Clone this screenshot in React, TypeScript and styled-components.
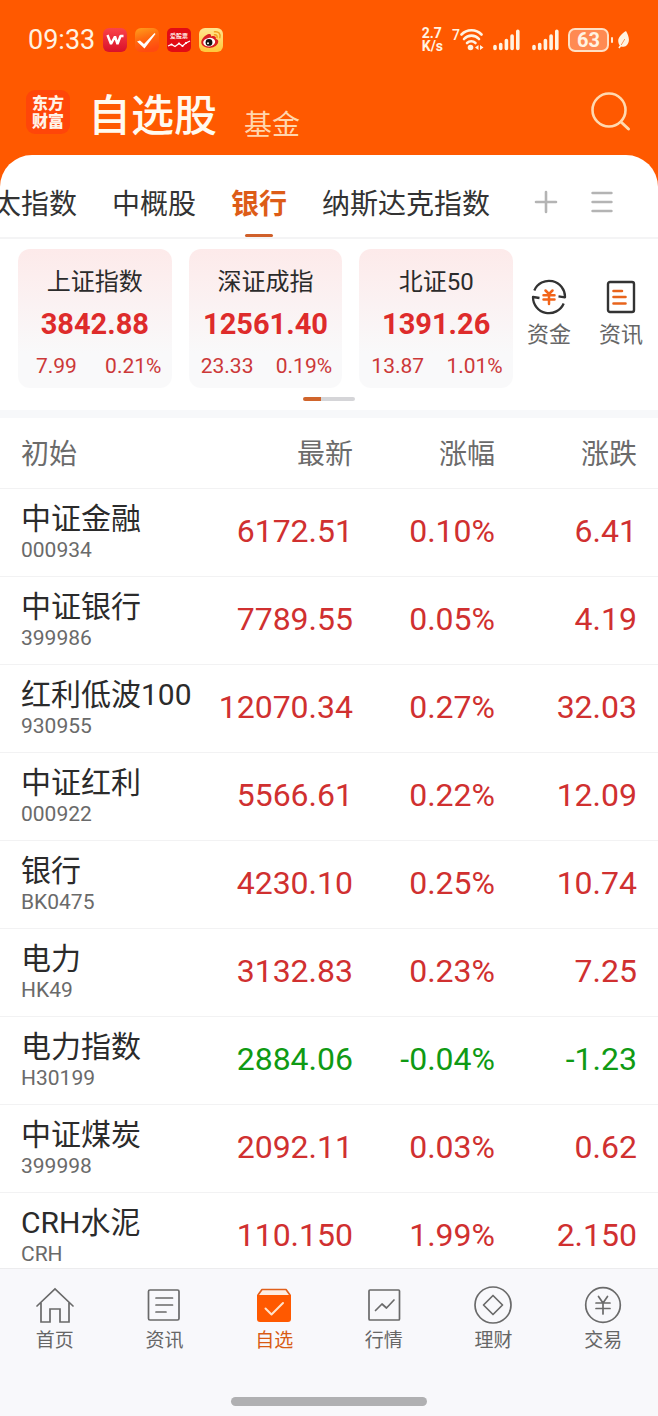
import React from 'react';
import styled, { createGlobalStyle } from 'styled-components';

const GlobalStyle = createGlobalStyle`
  * { box-sizing: border-box; }
  body {
    margin: 0;
    background: #ff5900;
    font-family: Roboto, "Noto Sans CJK SC", sans-serif;
    color: #2b2b2b;
  }
  button {
    border: 0;
    padding: 0;
    background: none;
    font: inherit;
    color: inherit;
    cursor: pointer;
  }
  a { color: inherit; text-decoration: none; }
  svg { display: block; flex: none; }
`;

const Screen = styled.div`
  display: flex;
  flex-direction: column;
  height: 100vh;
  overflow: hidden;
`;

/* ---------- status bar ---------- */

const StatusBar = styled.div`
  display: flex;
  align-items: center;
  justify-content: space-between;
  height: 80px;
  padding: 0 28px;
  color: #fff3e2;
`;

const StatusGroup = styled.div<{ $gap: number }>`
  display: flex;
  align-items: center;
  gap: ${(p) => p.$gap}px;
`;

const Clock = styled.span`
  font-size: 27px;
  line-height: 32px;
`;

const NetSpeed = styled.span`
  display: flex;
  flex-direction: column;
  font-size: 14px;
  line-height: 13px;
  font-weight: 700;
`;

const WifiBox = styled.span`
  display: flex;
  align-items: flex-start;
  font-size: 14px;
  line-height: 13px;
  font-weight: 500;
`;

const Battery = styled.span`
  display: flex;
  align-items: center;
  gap: 2px;
  &::after {
    content: '';
    width: 2px;
    height: 6px;
    border-radius: 1px;
    background: #ffe9d2;
  }
`;

const BatteryLevel = styled.span`
  width: 41px;
  height: 24px;
  border: 2px solid #ffe0c4;
  border-radius: 7px;
  background: #ff8a52;
  font-size: 20px;
  line-height: 20px;
  font-weight: 700;
  text-align: center;
`;

/* ---------- header ---------- */

const Header = styled.header`
  display: flex;
  align-items: center;
  height: 75px;
  padding: 0 26px 11px;
`;

const Logo = styled.span`
  display: flex;
  flex-direction: column;
  align-items: center;
  justify-content: center;
  width: 44px;
  height: 44px;
  padding-top: 1px;
  border-radius: 9px;
  background: #ff4609;
  color: #fff3e8;
  font-size: 16px;
  line-height: 18px;
  font-weight: 900;
`;

const Title = styled.h1`
  margin: 8px 0 0 18px;
  color: #fffaf0;
  font-size: 43px;
  line-height: 48px;
  font-weight: 500;
`;

const SubTitle = styled.button`
  && {
    margin: 28px auto 0 27px;
    color: #ffd6ae;
    font-size: 28px;
    line-height: 32px;
  }
`;

/* ---------- panel with tabs ---------- */

const Panel = styled.main`
  display: flex;
  flex-direction: column;
  flex: 1;
  min-height: 0;
  border-radius: 32px 32px 0 0;
  background: #fff;
  overflow: hidden;
`;

const TabBar = styled.div`
  display: flex;
  flex: none;
  height: 84px;
  border-bottom: 2px solid #f4f4f5;
`;

const Tabs = styled.nav`
  display: flex;
  justify-content: flex-end;
  gap: 35px;
  flex: 1;
  min-width: 0;
  overflow: hidden;
`;

const Tab = styled.button<{ $active?: boolean }>`
  && {
    display: flex;
    flex-direction: column;
    align-items: center;
    justify-content: space-between;
    flex: none;
    padding-top: 32px;
    white-space: nowrap;
    font-size: 28px;
    line-height: 36px;
    color: ${(p) => (p.$active ? '#dd5c17' : '#333')};
    font-weight: ${(p) => (p.$active ? 700 : 400)};
  }
  &::after {
    content: '';
    width: 28px;
    height: 3px;
    border-radius: 2px;
    background: ${(p) => (p.$active ? '#d0602a' : 'transparent')};
  }
`;

const TabTools = styled.div`
  display: flex;
  align-items: center;
  gap: 32px;
  padding: 12px 44px 0;
`;

/* ---------- indices ---------- */

const Indices = styled.section`
  display: flex;
  flex: none;
  padding: 10px 1px 0 18px;
`;

const Cards = styled.div`
  display: grid;
  grid-template-columns: repeat(3, 1fr);
  gap: 17px;
  flex: 1;
`;

const Card = styled.article`
  display: flex;
  flex-direction: column;
  align-items: center;
  height: 139px;
  padding-top: 17px;
  border-radius: 12px;
  background: linear-gradient(#fdeaea, #f9f9fa 75%);
`;

const CardName = styled.span`
  font-size: 24px;
  line-height: 32px;
`;

const CardValue = styled.strong`
  margin-top: 8px;
  font-size: 29px;
  line-height: 36px;
  color: #de2b2b;
`;

const CardChange = styled.div`
  display: grid;
  grid-template-columns: 1fr 1fr;
  align-self: stretch;
  margin-top: 10px;
  font-size: 21px;
  line-height: 28px;
  color: #cc3838;
  text-align: center;
`;

const Quick = styled.button`
  && {
    display: flex;
    flex-direction: column;
    align-items: center;
    gap: 4px;
    width: 72px;
    padding-top: 30px;
    color: #666;
    font-size: 22px;
    line-height: 32px;
  }
`;

const Pager = styled.div`
  flex: none;
  align-self: center;
  width: 52px;
  height: 4px;
  margin: 9px 0;
  border-radius: 2px;
  background: linear-gradient(to right, #d0652c 34%, #d5d5d8 34%);
`;

const Band = styled.div`
  flex: none;
  height: 8px;
  background: #f7f8fa;
`;

/* ---------- quotes ---------- */

const List = styled.div`
  flex: 1;
  min-height: 0;
  overflow-y: auto;
  scrollbar-width: none;
`;

const Table = styled.table`
  width: 100%;
  table-layout: fixed;
  border-collapse: separate;
  border-spacing: 0;
`;

const Head = styled.th<{ $width?: number }>`
  width: ${(p) => (p.$width ? `${p.$width}px` : 'auto')};
  height: 71px;
  padding: 4px 0 0;
  border-bottom: 1px solid #f2f2f3;
  color: #6b6b6b;
  font-size: 28px;
  line-height: 36px;
  font-weight: 400;
  text-align: right;
  &:first-child { padding-left: 21px; text-align: left; }
  &:last-child { padding-right: 21px; }
`;

const NameCell = styled.th`
  height: 88px;
  padding: 0 0 2px 21px;
  border-bottom: 1px solid #f2f2f3;
  text-align: left;
  font-weight: 400;
  white-space: nowrap;
`;

const Name = styled.div`
  font-size: 30px;
  line-height: 36px;
`;

const Code = styled.div`
  color: #6a6a6a;
  font-size: 21px;
  line-height: 26px;
`;

const NumCell = styled.td<{ $down?: boolean }>`
  padding: 0 0 3px;
  border-bottom: 1px solid #f2f2f3;
  text-align: right;
  white-space: nowrap;
  font-size: 32px;
  line-height: 40px;
  color: ${(p) => (p.$down ? '#0f9a14' : '#d03030')};
  &:last-child { padding-right: 21px; }
`;

/* ---------- bottom bar ---------- */

const Bottom = styled.footer`
  flex: none;
  height: 148px;
  border-top: 1px solid #ececee;
  background: #f8f8fb;
`;

const BottomNav = styled.nav`
  display: grid;
  grid-template-columns: repeat(6, 1fr);
  height: 128px;
`;

const NavLink = styled.a<{ $active?: boolean }>`
  display: flex;
  flex-direction: column;
  align-items: center;
  gap: 2px;
  padding-top: 16px;
  font-size: 19px;
  line-height: 28px;
  color: ${(p) => (p.$active ? '#d85c14' : '#666')};
`;

const HomeBar = styled.div`
  width: 196px;
  height: 9px;
  margin: 0 auto;
  border-radius: 5px;
  background: #b0b0b2;
`;

/* ---------- drawings ---------- */

const AppW = () => (
  <svg width="24" height="24" viewBox="0 0 24 24" aria-hidden="true">
    <defs>
      <linearGradient id="wbg" x1="0" y1="0" x2="0" y2="1">
        <stop offset="0" stopColor="#fb4348" />
        <stop offset="1" stopColor="#d8102a" />
      </linearGradient>
    </defs>
    <rect width="24" height="24" rx="6" fill="url(#wbg)" />
    <path d="M4.500 7L8 16L12 8.500L14.500 16L17.500 8H20.500" fill="none" stroke="#fff" strokeWidth="2.400" strokeLinejoin="bevel" />
  </svg>
);

const AppCheck = () => (
  <svg width="24" height="24" viewBox="0 0 24 24" aria-hidden="true">
    <defs>
      <linearGradient id="cbg" x1="0" y1="0" x2="0.3" y2="1">
        <stop offset="0" stopColor="#ffa01c" />
        <stop offset="0.5" stopColor="#ff6a10" />
        <stop offset="1" stopColor="#ff4b10" />
      </linearGradient>
    </defs>
    <rect width="24" height="24" rx="6" fill="url(#cbg)" />
    <path d="M2 13.500L5 12.500L9 16L19.500 5L20.500 6L9.500 20.500Z" fill="#fff" />
  </svg>
);

const AppStock = () => (
  <svg width="24" height="24" viewBox="0 0 24 24" aria-hidden="true">
    <rect width="24" height="24" rx="5" fill="#e20c14" />
    <text x="12" y="10" textAnchor="middle" fontSize="6" fontWeight="700" fill="#ffe9e4">爱股票</text>
    <path d="M1 18L4.500 16.500L8 18.500L12 15.500L15.500 18L19 15L23 13" fill="none" stroke="#fff" strokeWidth="1.300" />
    <circle cx="4.500" cy="16.500" r="1.100" fill="#fff" />
    <circle cx="12" cy="15.500" r="1.100" fill="#fff" />
    <circle cx="15.500" cy="18" r="1.100" fill="#fff" />
    <circle cx="19" cy="15" r="1.100" fill="#fff" />
  </svg>
);

const AppWeibo = () => (
  <svg width="24" height="24" viewBox="0 0 24 24" aria-hidden="true">
    <defs>
      <linearGradient id="bbg" x1="0" y1="0" x2="0" y2="1">
        <stop offset="0" stopColor="#ffe68f" />
        <stop offset="1" stopColor="#ffc73a" />
      </linearGradient>
    </defs>
    <rect width="24" height="24" rx="6" fill="url(#bbg)" />
    <path d="M10 6C11.500 5.500 12.500 6.800 12 8.500C15 7.500 17.500 8.300 16.800 10.800C19 11.500 19.800 13 19 15C17.500 18.500 13 20.300 9 19.800C5 19.300 2 17 2.300 13.800C2.700 10.500 7 6.500 10 6Z" fill="#d81e22" />
    <ellipse cx="10.200" cy="14.200" rx="6" ry="4.300" transform="rotate(-8 10.200 14.200)" fill="#fff" />
    <circle cx="10" cy="14.400" r="3.400" fill="#111" />
    <circle cx="9" cy="15.200" r="1" fill="#fff" />
    <path d="M15.500 3.800C19.500 3 22 6 20.800 9.700M15.500 6.800C17.500 6.500 18.500 7.800 18 9.500" fill="none" stroke="#f3a021" strokeWidth="1.500" strokeLinecap="round" />
  </svg>
);

const Wifi = () => (
  <svg width="24" height="22" viewBox="0 0 24 22" aria-hidden="true">
    <g fill="none" stroke="#fff3e2" strokeWidth="2.600" strokeLinecap="round">
      <path d="M1.500 5.500A14 14 0 0 1 21.500 5.500" />
      <path d="M4 10A10 10 0 0 1 19 10" />
      <path d="M7 14A6.500 6.500 0 0 1 15.500 14" />
    </g>
    <circle cx="10.500" cy="18.500" r="2.800" fill="#fff3e2" />
    <path d="M18.500 16V21L15 18.500ZM20 16V21L23.500 18.500Z" fill="#fff3e2" />
  </svg>
);

const Signal = () => (
  <svg width="27" height="22" viewBox="0 0 27 22" aria-hidden="true">
    <g stroke="#fff3e2" strokeWidth="3.600" strokeLinecap="round">
      <path d="M2 17.500V19.500M7.700 15.500V19.500M13.400 11.500V19.500M19.100 7V19.500M24.800 2.200V19.500" />
    </g>
  </svg>
);

const Leaf = () => (
  <svg width="13" height="18" viewBox="0 0 13 18" aria-hidden="true">
    <path d="M9 0C12 5 13.500 11 9.500 14.500C7.500 16.200 5 16 4 15.500L2.500 17.500L1.300 16.500L2.800 14.500C-1 9 2.500 4 9 0Z" fill="#fff3e2" />
    <path d="M7.800 8L4.200 14" stroke="#ff6a1c" strokeWidth="0.700" />
  </svg>
);

const SearchIcon = () => (
  <svg width="42" height="42" viewBox="0 0 42 42" fill="none" stroke="#ffd9b0" aria-hidden="true">
    <circle cx="19" cy="19" r="16.500" strokeWidth="2.600" />
    <path d="M31 31L38.500 38" strokeWidth="3" strokeLinecap="round" />
  </svg>
);

const PlusIcon = () => (
  <svg width="24" height="24" viewBox="0 0 24 24" stroke="#b4b4b4" strokeWidth="2.600" strokeLinecap="round" aria-hidden="true">
    <path d="M2 12H22M12 2V22" />
  </svg>
);

const MenuIcon = () => (
  <svg width="24" height="24" viewBox="0 0 24 24" stroke="#b4b4b4" strokeWidth="2.400" strokeLinecap="round" aria-hidden="true">
    <path d="M2.500 3H21.500M2.500 12H21.500M2.500 21H21.500" />
  </svg>
);

const FundIcon = () => (
  <svg width="36" height="36" viewBox="0 0 36 36" fill="none" aria-hidden="true">
    <g stroke="#333" strokeWidth="2.300" strokeLinejoin="round">
      <path d="M3.300 11.500A16 16 0 0 1 34 18.300L27.500 17.300" />
      <path d="M32.700 24.500A16 16 0 0 1 2 18L8.500 19" />
    </g>
    <path d="M14.500 11.500L18 15L21.500 11.500M12.500 16.200H23.500M12.500 20.500H23.500M18 16V25" stroke="#f26419" strokeWidth="2.500" strokeLinecap="round" />
  </svg>
);

const NewsIcon = () => (
  <svg width="36" height="36" viewBox="0 0 36 36" fill="none" aria-hidden="true">
    <rect x="5" y="3" width="26" height="30" rx="2" stroke="#333" strokeWidth="2.400" />
    <path d="M10.500 12H19M10.500 18H22.500M10.500 24.500H22.500" stroke="#e8641c" strokeWidth="2.600" strokeLinecap="round" />
  </svg>
);

const NavIcon = ({ children }: { children: React.ReactNode }) => (
  <svg width="40" height="40" viewBox="0 0 40 40" fill="none" stroke="#6a6a6a" strokeWidth="1.700" strokeLinejoin="round" strokeLinecap="round" aria-hidden="true">
    {children}
  </svg>
);

const navItems = [
  {
    label: '首页',
    icon: <path d="M2 21L20 4L38 21M6 18V37H15V24H25V37H34V18" strokeLinejoin="miter" />,
  },
  {
    label: '资讯',
    icon: (
      <>
        <rect x="4.500" y="5" width="30.500" height="30" rx="1.500" />
        <path d="M12 13H28.500M12 20H28.500M12 27H22" />
      </>
    ),
  },
  {
    label: '自选',
    active: true,
    icon: (
      <>
        <path d="M4 10L8 4.500H32L36 10" stroke="#e0601c" fill="#fdeee3" />
        <path d="M3 10H37V34Q37 37 34 37H6Q3 37 3 34Z" fill="#ff5900" stroke="none" />
        <path d="M11.500 23.500L17.500 29.500L29 18" stroke="#ffe3cc" strokeWidth="2" />
      </>
    ),
  },
  {
    label: '行情',
    icon: (
      <>
        <rect x="5" y="5" width="30.500" height="30" rx="1" />
        <path d="M11.500 25.500L18 19L22.500 23L30 15" />
      </>
    ),
  },
  {
    label: '理财',
    icon: (
      <>
        <circle cx="20" cy="20" r="18" />
        <path d="M20 10.500L29.500 20L20 29.500L10.500 20Z" />
      </>
    ),
  },
  {
    label: '交易',
    icon: (
      <>
        <circle cx="20" cy="20" r="17.300" />
        <path d="M15.500 11.500L20 18L24.500 11.500M13 18H27M13 23.500H27M20 18V29" />
      </>
    ),
  },
];

const indices = [
  { name: '上证指数', value: '3842.88', change: '7.99', percent: '0.21%' },
  { name: '深证成指', value: '12561.40', change: '23.33', percent: '0.19%' },
  { name: '北证50', value: '1391.26', change: '13.87', percent: '1.01%' },
];

const quotes = [
  ['中证金融', '000934', '6172.51', '0.10%', '6.41'],
  ['中证银行', '399986', '7789.55', '0.05%', '4.19'],
  ['红利低波100', '930955', '12070.34', '0.27%', '32.03'],
  ['中证红利', '000922', '5566.61', '0.22%', '12.09'],
  ['银行', 'BK0475', '4230.10', '0.25%', '10.74'],
  ['电力', 'HK49', '3132.83', '0.23%', '7.25'],
  ['电力指数', 'H30199', '2884.06', '-0.04%', '-1.23'],
  ['中证煤炭', '399998', '2092.11', '0.03%', '0.62'],
  ['CRH水泥', 'CRH', '110.150', '1.99%', '2.150'],
];

const tabs = ['太指数', '中概股', '银行', '纳斯达克指数'];

export default function App() {
  return (
    <Screen>
      <GlobalStyle />
      <StatusBar>
        <StatusGroup $gap={8}>
          <Clock>09:33</Clock>
          <AppW />
          <AppCheck />
          <AppStock />
          <AppWeibo />
        </StatusGroup>
        <StatusGroup $gap={9}>
          <NetSpeed>
            <span>2.7</span>
            <span>K/s</span>
          </NetSpeed>
          <WifiBox>7<Wifi /></WifiBox>
          <StatusGroup $gap={12}>
            <Signal />
            <Signal />
          </StatusGroup>
          <StatusGroup $gap={4}>
            <Battery><BatteryLevel>63</BatteryLevel></Battery>
            <Leaf />
          </StatusGroup>
        </StatusGroup>
      </StatusBar>
      <Header>
        <Logo>
          <span>东方</span>
          <span>财富</span>
        </Logo>
        <Title>自选股</Title>
        <SubTitle>基金</SubTitle>
        <button aria-label="搜索"><SearchIcon /></button>
      </Header>
      <Panel>
        <TabBar>
          <Tabs>
            {tabs.map((t) => (
              <Tab key={t} $active={t === '银行'}>{t}</Tab>
            ))}
          </Tabs>
          <TabTools>
            <button aria-label="添加"><PlusIcon /></button>
            <button aria-label="菜单"><MenuIcon /></button>
          </TabTools>
        </TabBar>
        <Indices>
          <Cards>
            {indices.map((i) => (
              <Card key={i.name}>
                <CardName>{i.name}</CardName>
                <CardValue>{i.value}</CardValue>
                <CardChange>
                  <span>{i.change}</span>
                  <span>{i.percent}</span>
                </CardChange>
              </Card>
            ))}
          </Cards>
          <Quick><FundIcon />资金</Quick>
          <Quick><NewsIcon />资讯</Quick>
        </Indices>
        <Pager />
        <Band />
        <List>
          <Table>
            <thead>
              <tr>
                <Head scope="col">初始</Head>
                <Head scope="col" $width={142}>最新</Head>
                <Head scope="col" $width={142}>涨幅</Head>
                <Head scope="col" $width={163}>涨跌</Head>
              </tr>
            </thead>
            <tbody>
              {quotes.map(([name, code, ...nums]) => (
                <tr key={code}>
                  <NameCell scope="row">
                    <Name>{name}</Name>
                    <Code>{code}</Code>
                  </NameCell>
                  {nums.map((n, k) => (
                    <NumCell key={k} $down={nums[1].startsWith('-')}>{n}</NumCell>
                  ))}
                </tr>
              ))}
            </tbody>
          </Table>
        </List>
      </Panel>
      <Bottom>
        <BottomNav>
          {navItems.map((n) => (
            <NavLink key={n.label} href="#" $active={n.active}>
              <NavIcon>{n.icon}</NavIcon>
              {n.label}
            </NavLink>
          ))}
        </BottomNav>
        <HomeBar />
      </Bottom>
    </Screen>
  );
}
